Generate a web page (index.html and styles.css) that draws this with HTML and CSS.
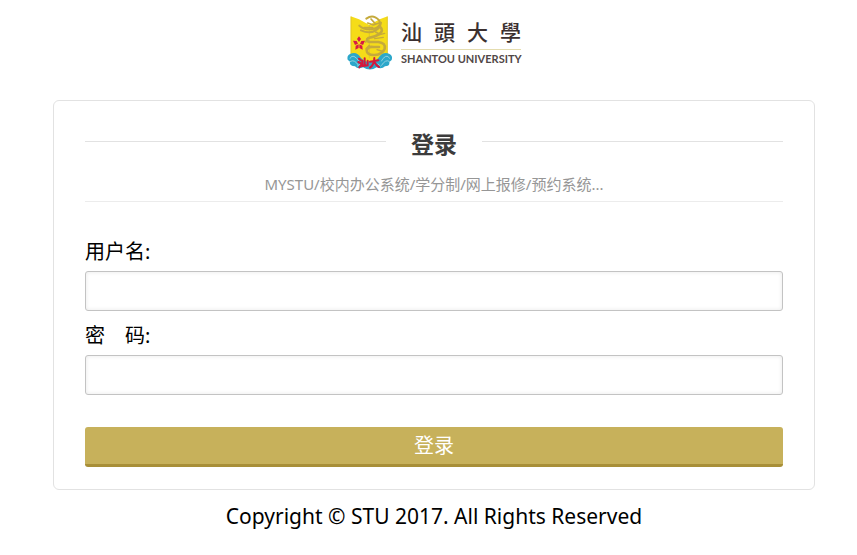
FILE: index.html
```html
<!DOCTYPE html>
<html lang="zh-CN">
<head>
<meta charset="utf-8">
<meta name="viewport" content="width=device-width, initial-scale=1">
<title>登录</title>
<link rel="stylesheet" href="styles.css">
</head>
<body>
<header class="brand">
  <svg class="crest" viewBox="22 20 141 168" aria-hidden="true">
    <path d="M33 24 L58 33 L89 50 L120 33 L144 24 V150 Q118 155 89 173 Q64 155 33 150Z" fill="#f5dc18"/>
    <path d="M34 25 V146 M143 25 V146 M89 50 V150" fill="none" stroke="#d8bd2b" stroke-width="2"/>
    <g fill="none" stroke="#c5aa3c" stroke-linecap="round" stroke-linejoin="round">
      <path d="M80 31 Q94 21 107 27 Q124 36 120 49 Q114 60 94 63 Q72 64 59 52 M64 66 Q90 78 108 66 Q122 59 124 43" stroke-width="6"/>
      <path d="M84 44 L101 50 L118 44 M94 32 L106 45 M74 58 L99 58 M108 71 L119 77" stroke-width="5"/>
      <path d="M121 55 Q134 67 118 78 Q105 86 86 89 Q77 97 89 101 L116 101 Q139 104 135 121 Q128 138 105 140 Q81 141 81 125 Q85 113 101 116 L118 116" stroke-width="8"/>
      <path d="M82 91 L78 102 M105 91 L131 87 M121 79 L135 75 M89 111 L79 121 M112 124 L125 128" stroke-width="4"/>
    </g>
    <g fill="#d71946">
      <path d="M58 84 L64 92 L58 101 L52 92Z"/>
      <path d="M40 97 L51 98 L55 106 L46 110Z M76 97 L65 98 L61 106 L70 110Z"/>
      <path d="M47 124 L48 112 L57 108 L57 119Z M69 124 L68 112 L59 108 L59 119Z"/>
    </g>
    <path d="M24 154 Q20 139 37 135 Q53 131 64 149 Q77 163 90 159 Q104 163 116 149 Q128 131 144 135 Q161 139 156 155 L149 161 Q151 173 136 174 Q126 184 111 177 Q91 190 70 177 Q54 184 46 174 Q28 173 31 160Z" fill="#2ca7ca"/>
    <path d="M31 151 Q34 141 43 144 Q52 149 58 159 M31 160 Q44 151 57 172 M150 151 Q146 141 138 144 Q129 149 125 159 M150 160 Q138 151 125 172 M52 174 L62 166 M123 174 L114 166" fill="none" stroke="#8fd0e0" stroke-width="3"/>
    <g fill="none" stroke="#d5173b" stroke-width="6" stroke-linecap="round">
      <path d="M58 151 L64 156 M56 161 L62 164 M59 177 L65 169 M75 150 V172 M68 157 V173 L84 171 V157"/>
      <path d="M91 160 L116 156 M104 149 Q104 169 91 178 M104 160 Q109 172 118 176"/>
    </g>
  </svg>
  <div class="wordmark">
    <div class="wordmark-zh"><span>汕</span><span>頭</span><span>大</span><span>學</span></div>
    <div class="wordmark-en">SHANTOU UNIVERSITY</div>
  </div>
</header>
<main class="card">
  <div class="heading">
    <h1>登录</h1>
  </div>
  <p class="systems">MYSTU/校内办公系统/学分制/网上报修/预约系统...</p>
  <form>
    <label for="username">用户名:</label>
    <input id="username" name="username" type="text">
    <label for="password">密&#12288;码:</label>
    <input id="password" name="password" type="password">
    <button type="submit">登录</button>
  </form>
</main>
<footer>Copyright © STU 2017. All Rights Reserved</footer>
</body>
</html>
```
FILE: styles.css
```css
* {
  box-sizing: border-box;
}

body {
  margin: 0;
  padding: 15px 42px 0 53px;
  background: #fff;
  color: #000;
  font: 20px/28px "Noto Sans", "Noto Sans CJK SC", sans-serif;
}

.brand {
  display: flex;
  justify-content: center;
  gap: 7px;
  margin-bottom: 29px;
}

.crest {
  width: 47px;
  height: 56px;
}

.wordmark {
  width: 120px;
  padding-top: 4px;
  white-space: nowrap;
}

.wordmark-zh {
  display: flex;
  justify-content: space-between;
  padding-bottom: 5px;
  border-bottom: 1px solid #e4dcae;
  color: #3b3030;
  font: 500 21px/25px "Noto Sans CJK TC", sans-serif;
}

.wordmark-en {
  padding-top: 2px;
  color: #514747;
  font: bold 11px/14px Lato, sans-serif;
}

.card {
  padding: 27px 31px 22px;
  border: 1px solid #e2e2e2;
  border-radius: 6px;
}

.heading {
  display: flex;
  gap: 25px;
}

.heading::before,
.heading::after {
  content: "";
  flex: 1;
  height: 13px;
  border-bottom: 1px solid #e2e2e2;
}

h1 {
  margin: 0;
  color: #3c3c3c;
  font-size: 23px;
  line-height: 32px;
}

.systems {
  margin: 12px 0 36px;
  padding-bottom: 5px;
  border-bottom: 1px solid #ececec;
  color: #969696;
  font-size: 15px;
  line-height: 24px;
  text-align: center;
}

form {
  display: flex;
  flex-direction: column;
}

label {
  margin-bottom: 5px;
}

input {
  height: 40px;
  margin: 0 0 11px;
  padding: 0 10px;
  border: 1px solid #c3c3c3;
  border-radius: 3px;
  background: #fff;
  box-shadow: inset 0 0 4px #e8e8e8;
  font: inherit;
}

button {
  height: 40px;
  margin-top: 21px;
  padding: 0;
  border: 0;
  border-bottom: 3px solid #a88f38;
  border-radius: 3px;
  background: #c7b15b;
  color: #fff;
  font: inherit;
}

footer {
  padding-top: 12px;
  font-size: 21px;
  text-align: center;
}
```
